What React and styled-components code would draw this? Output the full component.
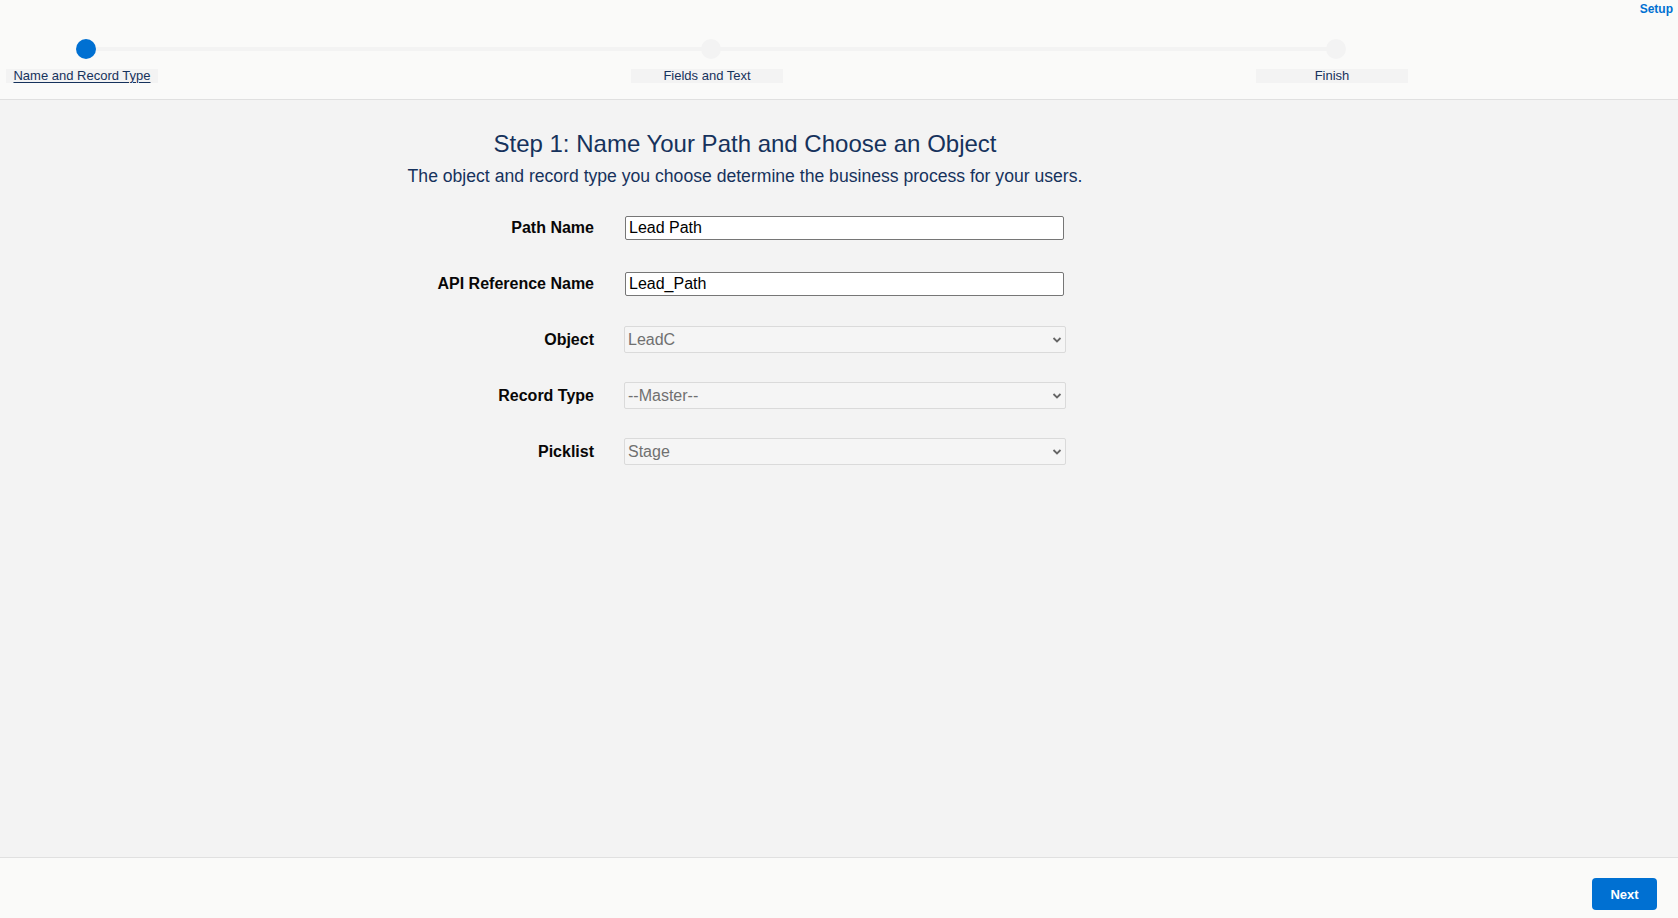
import React from 'react';
import styled, { createGlobalStyle } from 'styled-components';

const GlobalStyle = createGlobalStyle`
    html, body {
        margin: 0;
        padding: 0;
        background: #f3f3f3;
        font-family: Arial, "Liberation Sans", Helvetica, sans-serif;
    }
`

const Page = styled.div`
    display: flex;
    flex-direction: column;
    height: 100vh;
    overflow: hidden;
`

const Header = styled.header`
    background: #fafaf9;
    border-bottom: 1px solid #e0e0e0;
    height: 99px;
    flex-shrink: 0;
`

const TopBar = styled.div`
    display: flex;
    justify-content: flex-end;
    height: 39px;
    padding-right: 5px;
`

const SetupLink = styled.a`
    font-size: 12px;
    font-weight: bold;
    color: #0070d2;
    text-decoration: none;
    line-height: 14px;
    margin-top: 2px;
`

const Stepper = styled.div`
    position: relative;
    display: flex;
    justify-content: space-between;
    width: 1402px;
    margin-left: 6px;

    &::before {
        content: '';
        position: absolute;
        left: 80px;
        top: 8px;
        width: 1250px;
        height: 4px;
        background: #f3f3f3;
    }
`

const Step = styled.div`
    position: relative;
    width: 152px;
    display: flex;
    flex-direction: column;
    align-items: center;
`

const Dot = styled.span`
    width: 20px;
    height: 20px;
    border-radius: 50%;
    margin-left: 8px;
    background: ${p => (p.$active ? '#0070d2' : '#f3f3f3')};
`

const StepLabel = styled.a`
    display: block;
    width: 100%;
    margin-top: 10px;
    height: 14px;
    line-height: 14px;
    background: #f3f3f3;
    font-size: 13px;
    color: #16325c;
    text-align: center;
    text-decoration: ${p => (p.$active ? 'underline' : 'none')};
    text-underline-offset: 2px;
`

const Main = styled.main`
    flex: 1;
    background: #f3f3f3;
`

const Intro = styled.div`
    width: 1490px;
    text-align: center;
    color: #16325c;
    padding-top: 31px;
`

const Title = styled.h1`
    margin: 0;
    font-size: 24px;
    font-weight: normal;
    line-height: 25px;
`

const Subtitle = styled.p`
    margin: 11px 0 0;
    font-size: 17.6px;
    line-height: 19px;
`

const Form = styled.div`
    display: grid;
    grid-template-columns: 200px 442px;
    grid-auto-rows: 56px;
    column-gap: 30px;
    align-items: center;
    margin: 14px 0 0 394px;
`

const Label = styled.label`
    text-align: right;
    font-size: 16px;
    font-weight: bold;
    color: #080707;
`

const TextInput = styled.input`
    box-sizing: border-box;
    width: 439px;
    height: 24px;
    margin-left: 1px;
    padding: 0 3px;
    border: 1px solid #767676;
    border-radius: 2px;
    background: #fff;
    font-family: Arial, "Liberation Sans", sans-serif;
    font-size: 16px;
    color: #000;
    outline: none;
`

const SelectWrap = styled.div`
    position: relative;
    width: 442px;
    height: 27px;
    margin-top: -1px;
`

const Select = styled.select`
    box-sizing: border-box;
    width: 100%;
    height: 27px;
    padding: 0 3px;
    border: 1px solid #dadada;
    border-radius: 2px;
    background: #f5f5f5;
    font-family: Arial, "Liberation Sans", sans-serif;
    font-size: 16px;
    color: #707070;
    appearance: none;
    opacity: 1;
`

const Chevron = styled.svg`
    position: absolute;
    right: 4px;
    top: 9px;
    width: 10px;
    height: 9px;
    pointer-events: none;
`

const Footer = styled.footer`
    height: 61px;
    flex-shrink: 0;
    background: #fafaf9;
    border-top: 1px solid #e0e0e0;
    display: flex;
    justify-content: flex-end;
    align-items: flex-start;
    padding: 20px 21px 0 0;
    box-sizing: border-box;
`

const NextButton = styled.button`
    width: 65px;
    height: 32px;
    border: none;
    border-radius: 4px;
    background: #0070d2;
    color: #fff;
    font-family: Arial, "Liberation Sans", sans-serif;
    font-size: 13px;
    font-weight: bold;
`

const steps = [
    { label: 'Name and Record Type', active: true },
    { label: 'Fields and Text' },
    { label: 'Finish' },
]

function Dropdown({ value }) {
    return (
        <SelectWrap>
            <Select disabled value={value} onChange={() => {}}>
                <option>{value}</option>
            </Select>
            <Chevron viewBox="0 0 10 9">
                <path d="M1.5 3 L5 6.5 L8.5 3" fill="none" stroke="#666" strokeWidth="1.8" />
            </Chevron>
        </SelectWrap>
    )
}

export default function App() {
    return (
        <Page>
            <GlobalStyle />
            <Header>
                <TopBar>
                    <SetupLink href="#">Setup</SetupLink>
                </TopBar>
                <Stepper>
                    {steps.map(s => (
                        <Step key={s.label}>
                            <Dot $active={s.active} />
                            <StepLabel $active={s.active}>{s.label}</StepLabel>
                        </Step>
                    ))}
                </Stepper>
            </Header>
            <Main>
                <Intro>
                    <Title>Step 1: Name Your Path and Choose an Object</Title>
                    <Subtitle>The object and record type you choose determine the business process for your users.</Subtitle>
                </Intro>
                <Form>
                    <Label>Path Name</Label>
                    <TextInput defaultValue="Lead Path" />
                    <Label>API Reference Name</Label>
                    <TextInput defaultValue="Lead_Path" />
                    <Label>Object</Label>
                    <Dropdown value="LeadC" />
                    <Label>Record Type</Label>
                    <Dropdown value="--Master--" />
                    <Label>Picklist</Label>
                    <Dropdown value="Stage" />
                </Form>
            </Main>
            <Footer>
                <NextButton>Next</NextButton>
            </Footer>
        </Page>
    )
}
